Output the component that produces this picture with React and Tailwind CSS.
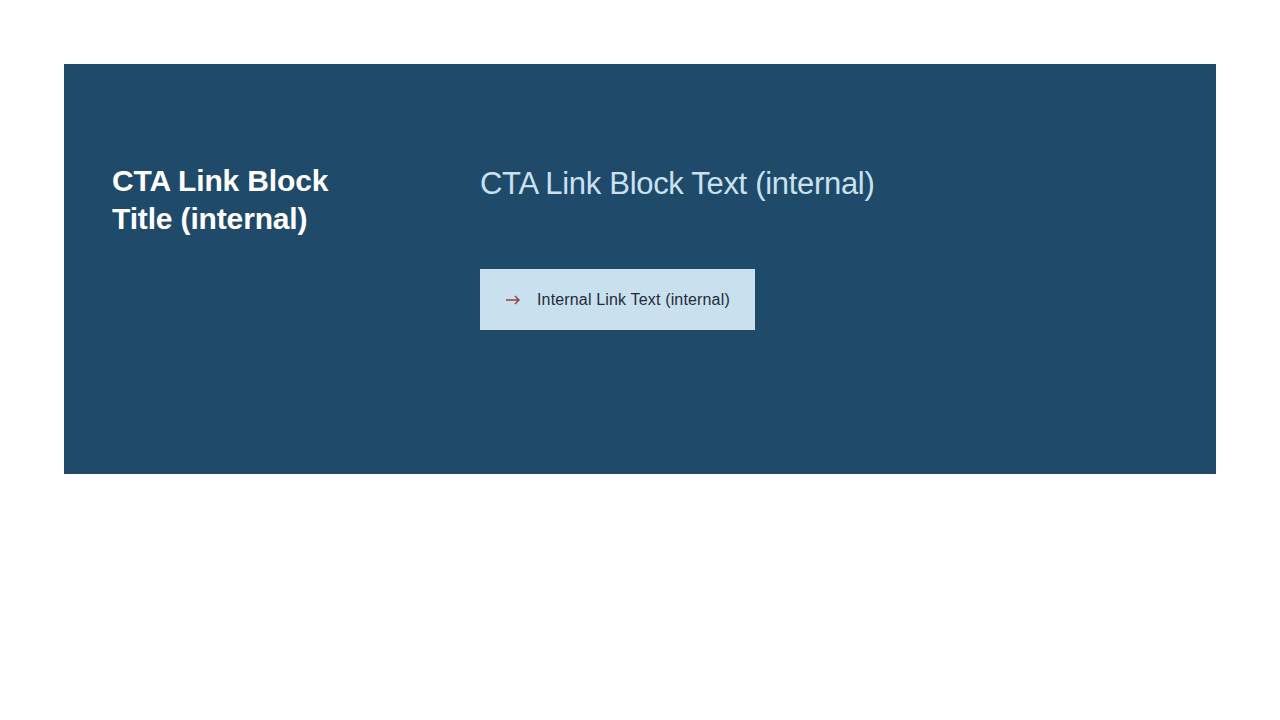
export default function App() {
  return (
    <div className="min-h-screen bg-white px-16 pt-16" style={{ fontFamily: '"Liberation Sans", Arial, sans-serif' }}>
      <section className="flex h-[410px] bg-[#1f4a69] pl-12 pt-[98px]">
        <div className="w-[368px] shrink-0">
          <h2 className="text-[30px] font-bold leading-[38px] tracking-[-0.005em] text-white">
            CTA Link Block
            <br />
            Title (internal)
          </h2>
        </div>
        <div className="flex flex-col items-start">
          <p className="mt-[3px] text-[31px] leading-[38px] tracking-[-0.01em] text-[#c9e1f1]">
            CTA Link Block Text (internal)
          </p>
          <a
            href="#"
            className="mt-[66px] flex h-[61px] items-center gap-4 bg-[#c9e0ef] pl-[25px] pr-[25px] text-base tracking-[0.01em] text-[#1f2b3a]"
          >
            <svg width="16" height="10" viewBox="0 0 16 10" fill="none" stroke="#9a3b3b" strokeWidth="1.4">
              <path d="M1 5h13M10 1l4 4-4 4" />
            </svg>
            <span>Internal Link Text (internal)</span>
          </a>
        </div>
      </section>
    </div>
  )
}
